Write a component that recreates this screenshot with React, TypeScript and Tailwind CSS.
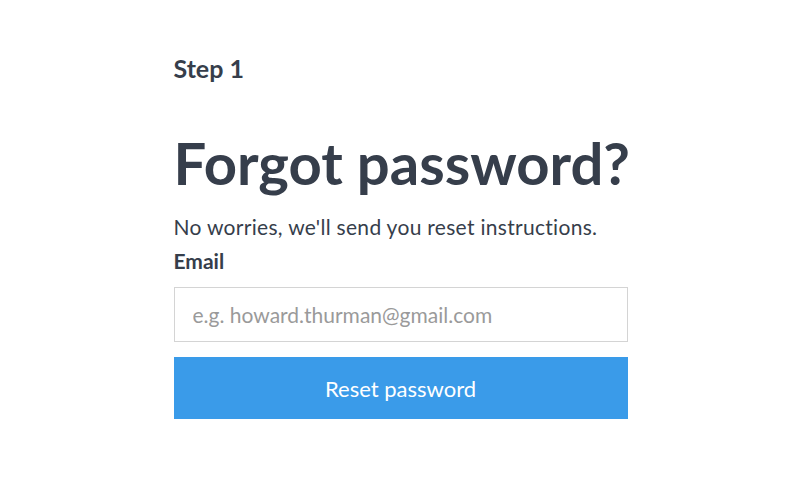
import React from 'react';

export default function App() {
  return (
    <div className="min-h-screen w-full bg-white flex justify-center" style={{ fontFamily: 'Lato, "Noto Sans", sans-serif' }}>
      <div className="w-[454px] ml-[2px] pt-[51px] text-[#363e4b]">
        <div className="text-[25px] font-bold leading-[34px]">Step 1</div>
        <h1 className="mt-[43px] text-[58px] font-bold leading-[70px] whitespace-nowrap">Forgot password?</h1>
        <p className="mt-[15px] text-[21px] leading-[28px] tracking-[0.3px] whitespace-nowrap">No worries, we'll send you reset instructions.</p>
        <label className="block mt-[6px] text-[21px] font-bold leading-[28px]">Email</label>
        <input
          type="email"
          placeholder="e.g. howard.thurman@gmail.com"
          className="mt-[12px] block w-full h-[55px] border border-[#d4d4d4] px-[18px] text-[21px] text-[#363e4b] placeholder:text-[#9a9a9a] outline-none"
        />
        <button className="mt-[15px] block w-full h-[62px] bg-[#3a9be9] text-white text-[22px]">Reset password</button>
      </div>
    </div>
  );
}
